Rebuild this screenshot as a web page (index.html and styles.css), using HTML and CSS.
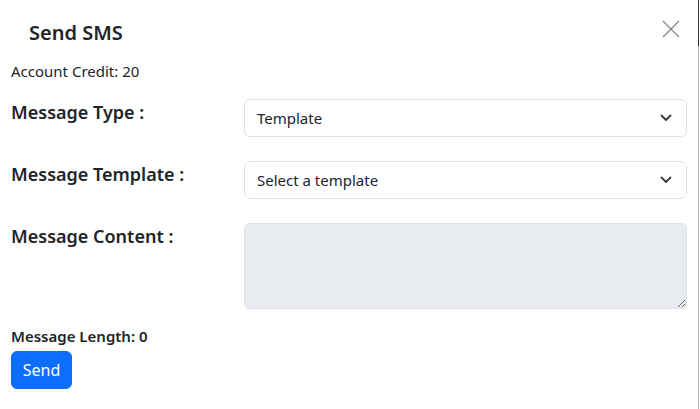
FILE: index.html
```html
<!DOCTYPE html>
<html>
<head>
<meta charset="utf-8">
<link rel="stylesheet" href="styles.css">
</head>
<body>
<div class="modal">
  <div class="modal-header">
    <h5 class="modal-title">Send SMS</h5>
    <button class="btn-close" aria-label="Close">
      <svg width="18" height="18" viewBox="0 0 18 18"><path d="M1 1L17 17M17 1L1 17" stroke="#8a8a8a" stroke-width="1.4" fill="none"/></svg>
    </button>
  </div>
  <div class="modal-body">
    <p class="credit">Account Credit: 20</p>
    <div class="row">
      <label class="lbl">Message Type :</label>
      <div class="field">
        <div class="select"><span>Template</span>
          <svg class="chev" width="12" height="8" viewBox="0 0 12 8"><path d="M1.5 1.5L6 6L10.5 1.5" stroke="#343a40" stroke-width="1.8" fill="none" stroke-linecap="round" stroke-linejoin="round"/></svg>
        </div>
      </div>
    </div>
    <div class="row">
      <label class="lbl">Message Template :</label>
      <div class="field">
        <div class="select"><span>Select a template</span>
          <svg class="chev" width="12" height="8" viewBox="0 0 12 8"><path d="M1.5 1.5L6 6L10.5 1.5" stroke="#343a40" stroke-width="1.8" fill="none" stroke-linecap="round" stroke-linejoin="round"/></svg>
        </div>
      </div>
    </div>
    <div class="row">
      <label class="lbl">Message Content :</label>
      <div class="field">
        <textarea class="content" disabled></textarea>
      </div>
    </div>
    <p class="length">Message Length: 0</p>
    <button class="btn-send">Send</button>
  </div>
  <div class="edge"></div>
</div>
</body>
</html>
```
FILE: styles.css
```css
* { box-sizing: border-box; }
html, body { margin: 0; padding: 0; background: #fff; }
body {
  font-family: "Noto Sans", "Open Sans", sans-serif;
  color: #212529;
  width: 700px;
  height: 409px;
  overflow: hidden;
}
.modal { position: relative; width: 700px; height: 409px; }
.modal-header {
  display: flex;
  align-items: center;
  justify-content: space-between;
  height: 60px;
  padding: 0 20px 0 29px;
}
.modal-title {
  margin: 5px 0 0 0;
  font-size: 20px;
  font-weight: 600;
  line-height: 1;
}
.btn-close {
  border: 0;
  background: none;
  padding: 0;
  width: 18px;
  height: 18px;
  margin-top: -2px;
  cursor: pointer;
}
.btn-close svg { display: block; }
.modal-body { padding: 0 13px 0 11px; }
.credit { margin: 1px 0 0 0; font-size: 15px; line-height: 20px; }
.row {
  display: flex;
  align-items: flex-start;
  margin-top: 18px;
}
.row + .row { margin-top: 24px; }
.lbl {
  width: 233px;
  flex: none;
  font-size: 18px;
  font-weight: 600;
  line-height: 24px;
  padding-top: 1px;
}
.field { flex: 1; }
.select {
  display: flex;
  align-items: center;
  justify-content: space-between;
  height: 38px;
  border: 1px solid #dee2e6;
  border-radius: 6px;
  padding: 0 14px 0 12px;
  font-size: 15px;
  background: #fff;
}
.chev { display: block; }
.content {
  display: block;
  width: 100%;
  height: 86px;
  border: 1px solid #dee2e6;
  border-radius: 6px;
  background: #e9ecef;
  resize: vertical;
  font: inherit;
}
.length {
  margin: 17px 0 0 0;
  font-size: 15px;
  font-weight: 600;
  line-height: 20px;
}
.btn-send {
  margin-top: 5px;
  background: #0d6efd;
  color: #fff;
  border: 1px solid #0d6efd;
  border-radius: 6px;
  height: 38px;
  width: 61px;
  font-family: inherit;
  font-size: 16px;
  padding: 0;
}
.edge {
  position: absolute;
  top: 0;
  right: 1px;
  width: 1px;
  height: 409px;
  background: #b5b5b5;
}
.edge::before {
  content: "";
  position: absolute;
  top: 0;
  left: 0;
  width: 1px;
  height: 46px;
  background: #333;
}
```
